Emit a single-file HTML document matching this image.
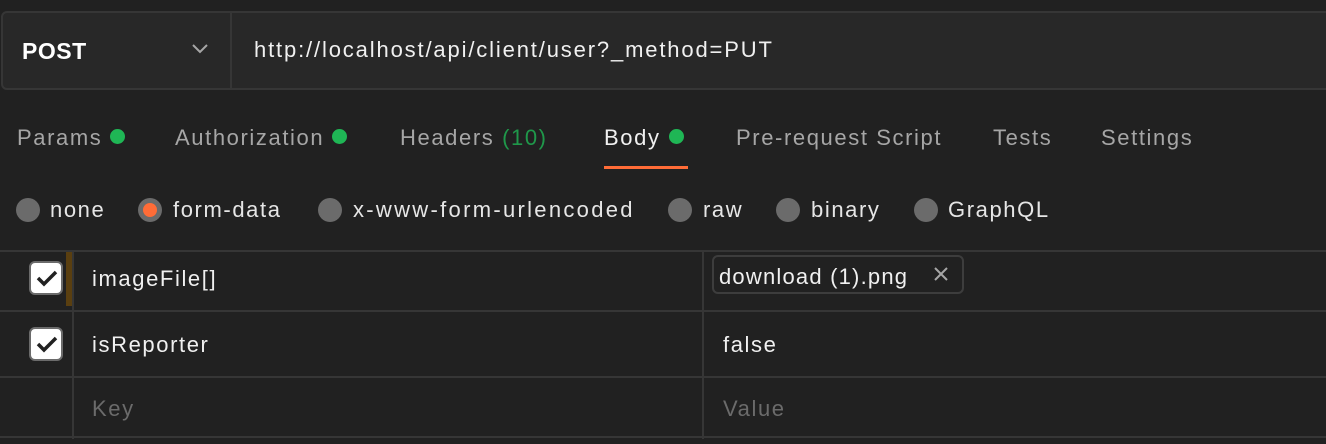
<!DOCTYPE html>
<html><head><style>
*{margin:0;padding:0;box-sizing:border-box}
body{width:1326px;height:444px;background:#212121;font-family:"Liberation Sans",sans-serif;color:#e6e6e6;position:relative;overflow:hidden}
.a{position:absolute;white-space:nowrap;letter-spacing:1.6px}
.box{position:absolute;left:1px;top:11px;width:1340px;height:79px;border:2px solid #363636;border-radius:6px;background:#282828}
.tab{font-size:22px;color:#a6a6a6;top:125px}
.dot{display:inline-block;width:15px;height:15px;border-radius:50%;background:#1fb655;margin-left:8px;vertical-align:1px}
.r{position:absolute;top:198px;width:24px;height:24px;border-radius:50%;background:#6b6b6b}
.rl{font-size:22px;top:197px;color:#e6e6e6}
.hl{position:absolute;left:0;width:1326px;height:2px;background:#363636}
.vl{position:absolute;top:251px;width:2px;height:188px;background:#363636}
.cb{position:absolute;left:29px;width:34px;height:34px;border-radius:6px;background:#fff;border:2px solid #6b6b6b}
.cb svg{position:absolute;left:5px;top:6px}
.t{font-size:22px;color:#f0f0f0}
</style></head><body>
<div class="box"></div>
<div style="position:absolute;left:230px;top:13px;width:2px;height:75px;background:#363636"></div>
<div class="a" style="left:22px;top:38px;font-size:23px;font-weight:bold;color:#fff;letter-spacing:0.5px">POST</div>
<svg class="a" style="left:191px;top:43px" width="18" height="12"><path d="M2 2l7 7 7-7" fill="none" stroke="#a6a6a6" stroke-width="2"/></svg>
<div class="a" style="left:254px;top:37px;font-size:22px;color:#f0f0f0;letter-spacing:1.85px">http://localhost/api/client/user?_method=PUT</div>

<div class="a tab" style="left:17px">Params<span class="dot"></span></div>
<div class="a tab" style="left:175px">Authorization<span class="dot"></span></div>
<div class="a tab" style="left:400px">Headers <span style="color:#1fb655;opacity:.8">(10)</span></div>
<div class="a tab" style="left:604px;color:#f0f0f0">Body<span class="dot"></span></div>
<div style="position:absolute;left:604px;top:166px;width:84px;height:3px;background:#ff6c37"></div>
<div class="a tab" style="left:736px">Pre-request Script</div>
<div class="a tab" style="left:993px">Tests</div>
<div class="a tab" style="left:1101px">Settings</div>

<div class="r" style="left:16px"></div><div class="a rl" style="left:50px">none</div>
<div class="r" style="left:138px"><div style="position:absolute;left:5px;top:5px;width:14px;height:14px;border-radius:50%;background:#ff6c37"></div></div><div class="a rl" style="left:173px">form-data</div>
<div class="r" style="left:318px"></div><div class="a rl" style="left:353px;letter-spacing:2.3px">x-www-form-urlencoded</div>
<div class="r" style="left:668px"></div><div class="a rl" style="left:703px">raw</div>
<div class="r" style="left:776px"></div><div class="a rl" style="left:811px">binary</div>
<div class="r" style="left:914px"></div><div class="a rl" style="left:948px">GraphQL</div>

<div class="hl" style="top:250px"></div>
<div class="hl" style="top:310px"></div>
<div class="hl" style="top:376px"></div>
<div class="hl" style="top:436px"></div>
<div class="vl" style="left:72px"></div>
<div class="vl" style="left:702px"></div>
<div style="position:absolute;left:66px;top:252px;width:6px;height:54px;background:#5a3f10"></div>

<div class="cb" style="top:261px"><svg width="22" height="18"><path d="M2 9l6 6L20 3" fill="none" stroke="#212121" stroke-width="3.5"/></svg></div>
<div class="cb" style="top:327px"><svg width="22" height="18"><path d="M2 9l6 6L20 3" fill="none" stroke="#212121" stroke-width="3.5"/></svg></div>

<div class="a t" style="left:92px;top:266px">imageFile[]</div>
<div class="a t" style="left:92px;top:332px">isReporter</div>
<div class="a t" style="left:92px;top:396px;color:#6b6b6b">Key</div>

<div style="position:absolute;left:712px;top:255px;width:252px;height:39px;border:2px solid #3d3d3d;border-radius:6px"></div>
<div class="a t" style="left:719px;top:264px;letter-spacing:1.2px">download (1).png</div>
<svg class="a" style="left:933px;top:266px" width="16" height="16"><path d="M2 2l12 12M14 2L2 14" stroke="#a6a6a6" stroke-width="2"/></svg>
<div class="a t" style="left:723px;top:332px">false</div>
<div class="a t" style="left:723px;top:396px;color:#6b6b6b">Value</div>
</body></html>
